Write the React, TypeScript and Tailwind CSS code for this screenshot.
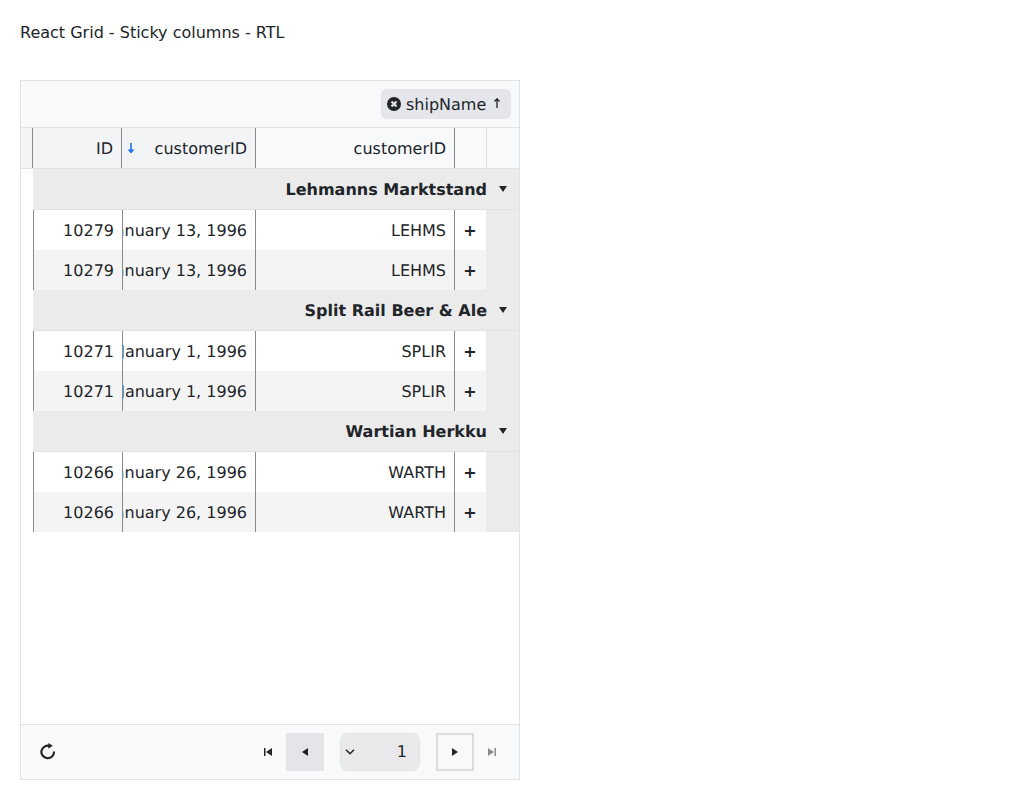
const groups = [
  { name: "Lehmanns Marktstand", id: "10279", date: "January 13, 1996", customer: "LEHMS" },
  { name: "Split Rail Beer & Ale", id: "10271", date: "January 1, 1996", customer: "SPLIR" },
  { name: "Wartian Herkku", id: "10266", date: "January 26, 1996", customer: "WARTH" },
];

function Row({ id, date, customer, alt }: { id: string; date: string; customer: string; alt: boolean }) {
  const bg = alt ? "bg-[#f4f4f4]" : "bg-white";
  return (
    <div className="flex h-10">
      <div className="w-3 bg-white" />
      <div className={`flex w-[89px] items-center justify-end border-l border-[#8a8a8a] pr-2 pt-px ${bg}`}>{id}</div>
      <div className={`flex w-[133px] items-center justify-end overflow-hidden whitespace-nowrap border-l border-[#8a8a8a] pr-2 pt-px ${bg}`}>
        <span className="shrink-0">{date}</span>
      </div>
      <div className={`flex w-[199px] items-center justify-end border-l border-[#8a8a8a] pr-2 pt-px ${bg}`}>{customer}</div>
      <div className={`flex w-[32px] items-center justify-center border-l border-[#8a8a8a] pr-px pt-px font-bold ${bg}`}>+</div>
      <div className="flex-1 bg-[#ebebeb]" />
    </div>
  );
}

function Group({ name }: { name: string }) {
  return (
    <div className="flex h-[41px]">
      <div className="w-3 bg-white" />
      <div className="flex flex-1 items-center border-b border-[#e0e2e6] bg-[#ebebeb]">
        <div className="w-[454px] truncate pt-px text-right font-bold">{name}</div>
        <div className="flex flex-1 justify-center">
          <svg width="8" height="6" viewBox="0 0 8 6" className="mb-px fill-[#212529]">
            <path d="M0 0h8L4 6z" />
          </svg>
        </div>
      </div>
    </div>
  );
}

function Pager() {
  return (
    <div className="flex items-center">
      <button className="flex h-[38px] w-[38px] items-center justify-center pl-[2px]">
        <svg width="8" height="8" viewBox="0 0 8 8" className="fill-[#212529]">
          <path d="M0 0h1.500v8H0zM8 0v8L2 4z" />
        </svg>
      </button>
      <button className="flex h-[38px] w-[38px] items-center justify-center bg-[#e4e5e8]">
        <svg width="6" height="8" viewBox="0 0 6 8" className="fill-[#212529]">
          <path d="M6 0v8L0 4z" />
        </svg>
      </button>
      <div className="ml-4 flex h-[38px] w-20 items-center justify-between rounded-lg border border-[#e4e5e8] bg-[#e9e9ec] pl-1 pr-3">
        <svg width="10" height="6" viewBox="0 0 10 6" fill="none" stroke="#212529" strokeWidth="1.5">
          <path d="M1 .8 5 4.800 9 .8" />
        </svg>
        <span>1</span>
      </div>
      <button className="ml-4 flex h-[38px] w-[38px] items-center justify-center border-2 border-[#dbdcdf]">
        <svg width="6" height="8" viewBox="0 0 6 8" className="fill-[#212529]">
          <path d="M0 0v8l6-4z" />
        </svg>
      </button>
      <button className="flex h-[38px] w-[37px] items-center justify-center pr-px">
        <svg width="8" height="8" viewBox="0 0 8 8" className="fill-[#8a8d91]">
          <path d="M0 0v8l6-4zM6.500 0H8v8H6.500z" />
        </svg>
      </button>
    </div>
  );
}

export default function App() {
  return (
    <div className="h-[800px] bg-white p-5 font-['DejaVu_Sans',sans-serif] text-base text-[#212529]">
      <div className="h-[60px] pt-[1px] leading-6">React Grid - Sticky columns - RTL</div>
      <div className="flex h-[700px] w-[500px] flex-col border border-[#e0e2e6] [text-rendering:geometricPrecision]">
        <div className="flex h-[47px] items-start justify-end border-b border-[#e0e2e6] bg-[#f8f9fb] pr-2 pt-2">
          <div className="flex h-[30px] w-[130px] items-center rounded-md bg-[#e4e6eb] pl-1.5">
            <svg width="14" height="14" viewBox="0 0 14 14">
              <circle cx="7" cy="7" r="7" fill="#212529" />
              <path d="M4.500 4.500l5 5M9.500 4.500l-5 5" stroke="#e4e6eb" strokeWidth="2.2" />
            </svg>
            <span className="ml-[5px] pt-px">shipName</span>
            <svg width="8" height="10" viewBox="0 0 8 10" fill="none" stroke="#212529" strokeWidth="1.3" className="mb-0.5 ml-[7px]">
              <path d="M4 10V1M1.500 3.500 4 .8l2.500 2.700" />
            </svg>
          </div>
        </div>
        <div className="flex h-[41px] border-b border-[#e0e2e6]">
          <div className="w-[11px] bg-[#f3f4f6]" />
          <div className="flex w-[89px] items-center justify-end border-l border-[#8a8a8a] bg-[#f3f4f6] pr-2 pt-px">ID</div>
          <div className="flex w-[134px] items-center justify-between border-l border-[#8a8a8a] bg-[#f3f4f6] pl-[5px] pr-2 pt-px">
            <svg width="8" height="11" viewBox="0 0 8 11" fill="none" stroke="#1d6ff2">
              <path d="M4 0v9" strokeWidth="1.600" />
              <path d="M.5 6.500h7L4 10.500z" fill="#1d6ff2" stroke="none" />
            </svg>
            <span>customerID</span>
          </div>
          <div className="flex w-[199px] items-center justify-end border-l border-[#8a8a8a] bg-[#f8f9fb] pr-2 pt-px">customerID</div>
          <div className="w-[32px] border-l border-[#8a8a8a] bg-[#f8f9fb]" />
          <div className="flex-1 border-l border-[#e0e2e6] bg-[#f8f9fb]" />
        </div>
        <div className="flex-1 bg-white">
          {groups.map((g) => (
            <div key={g.name}>
              <Group name={g.name} />
              <Row id={g.id} date={g.date} customer={g.customer} alt={false} />
              <Row id={g.id} date={g.date} customer={g.customer} alt={true} />
            </div>
          ))}
        </div>
        <div className="flex h-[55px] items-center justify-between border-t border-[#e0e2e6] bg-[#f8f9fb] pl-[19px] pr-2">
          <svg width="16" height="18" viewBox="0 0 16 18" fill="none" stroke="#212529" strokeWidth="2.2" className="mb-0.5">
            <path d="M10.500 4.300A6.300 6.300 0 1 0 14 9.500" />
            <path d="M8.300 1 12.800 3.800 8.300 6.800z" fill="#212529" stroke="none" />
          </svg>
          <Pager />
        </div>
      </div>
    </div>
  );
}
